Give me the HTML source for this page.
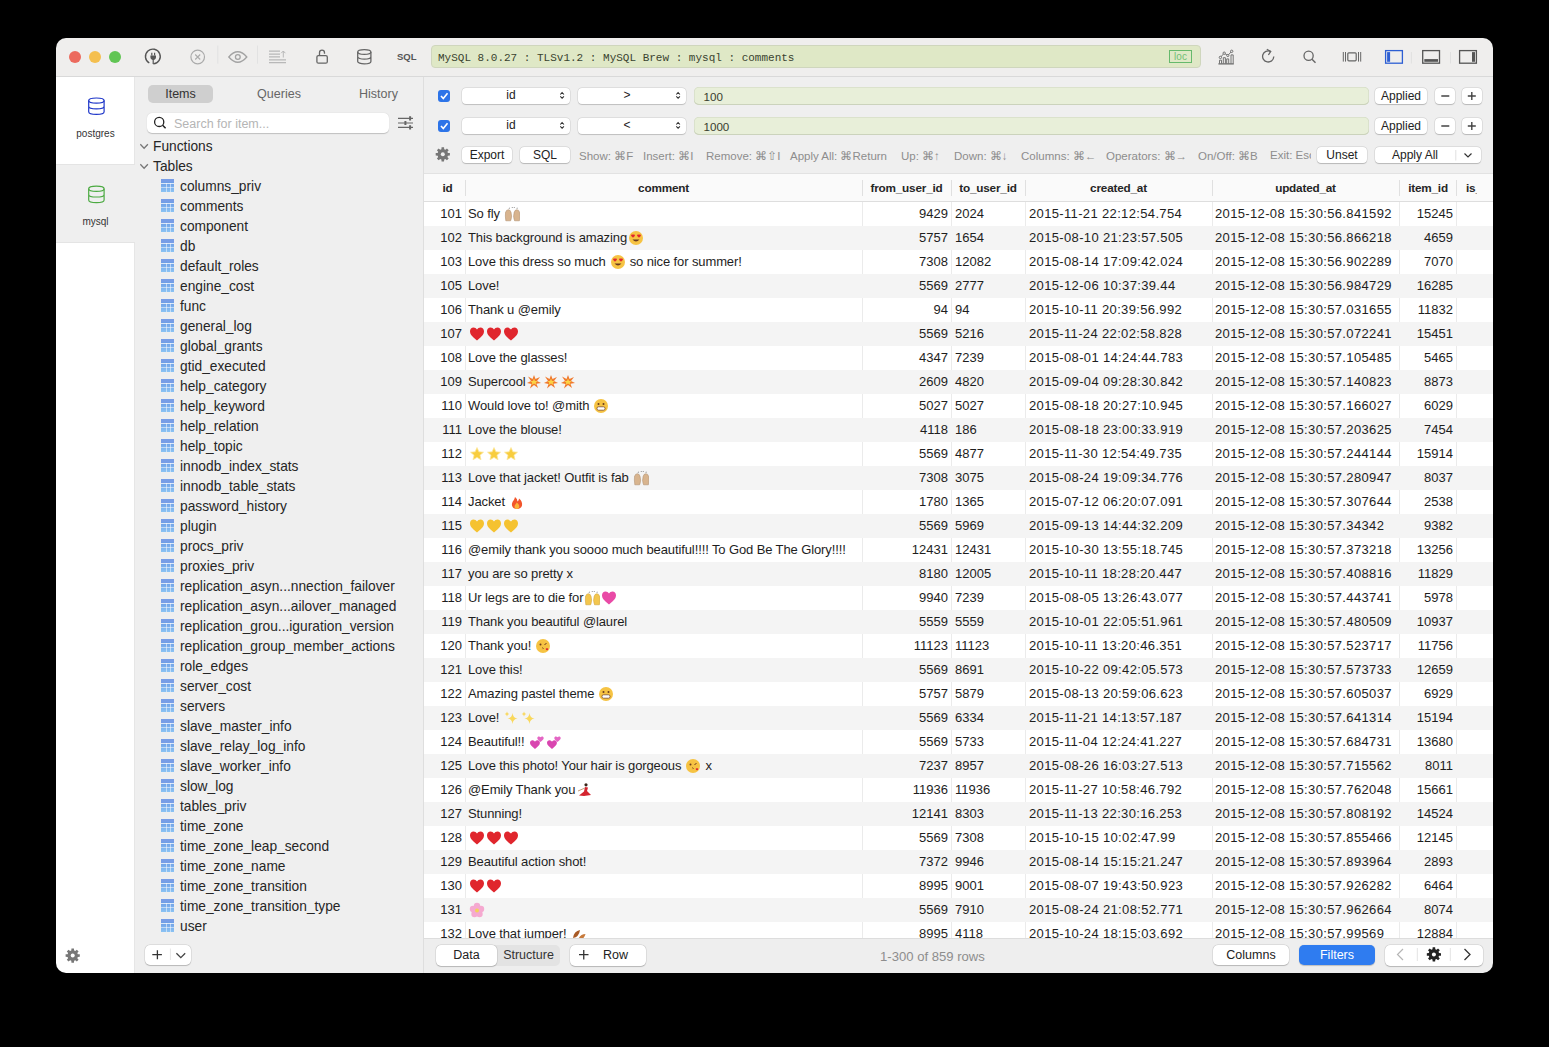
<!DOCTYPE html>
<html><head><meta charset="utf-8"><style>
html,body{margin:0;padding:0;background:#000;width:1549px;height:1047px;overflow:hidden;font-family:"Liberation Sans",sans-serif;color:#222;}
#win{position:absolute;left:0;top:0;width:1549px;height:1047px;clip-path:inset(38px 56px 74px 56px round 10px);}
.a{position:absolute;}
/* title bar */
#tb{position:absolute;left:56px;top:38px;width:1437px;height:39px;background:#efeeed;border-bottom:1px solid #d8d8d8;box-sizing:border-box;}
.tl{position:absolute;width:12px;height:12px;border-radius:50%;top:51px;}
#path{position:absolute;left:431px;top:45px;width:770px;height:23px;background:#dfe8c6;border:1px solid #cfd6bd;box-sizing:border-box;border-radius:4px;font-family:"Liberation Mono",monospace;font-size:11px;color:#39432f;line-height:25px;padding-left:6px;white-space:nowrap;}
#loc{position:absolute;left:1169px;top:50px;width:23px;height:13px;border:1px solid #66b96c;box-sizing:border-box;color:#72bf76;font-size:10px;line-height:11px;text-align:center;}
.sep{position:absolute;width:1px;background:#dcdcdc;}
/* db strip */
#strip{position:absolute;left:56px;top:76px;width:79px;height:897px;background:#fff;}
#strip .sel{position:absolute;left:0;top:88px;width:79px;height:79px;background:#efefef;border-top:1px solid #e4e4e4;border-bottom:1px solid #e4e4e4;box-sizing:border-box;}
#strip{border-right:1px solid #e6e6e6;box-sizing:border-box;}
.dbl{position:absolute;width:79px;text-align:center;font-size:10px;color:#333;margin-top:1px;}
/* sidebar */
#side{position:absolute;left:135px;top:76px;width:289px;height:897px;background:#efefef;border-right:1px solid #dedede;box-sizing:border-box;}
.seg{position:absolute;font-size:12.5px;color:#666;text-align:center;}
#items{position:absolute;left:148px;top:85px;width:65px;height:18px;border-radius:5px;background:#cfcfcf;color:#333;font-size:12.5px;line-height:18px;text-align:center;}
#search{position:absolute;left:147px;top:113px;width:242px;height:20px;background:#fff;border-radius:5px;box-shadow:0 0.5px 1px rgba(0,0,0,0.2);}
#search span{position:absolute;left:27px;top:4px;font-size:12.5px;color:#b5b5b5;}
.grp{position:absolute;left:153px;font-size:13.75px;margin-top:1px;color:#262626;}
.chev{position:absolute;left:141px;}
#tlist{position:absolute;left:160px;top:176px;}
.ti{position:absolute;left:0;height:20px;width:260px;}
.ticon{position:absolute;left:1px;top:3px;width:13px;height:13px;background:
 linear-gradient(rgba(255,255,255,.75),rgba(255,255,255,.75)) 0 3.5px/13px 1px no-repeat,
 linear-gradient(rgba(255,255,255,.5),rgba(255,255,255,.5)) 0 8px/13px 1px no-repeat,
 linear-gradient(rgba(255,255,255,.5),rgba(255,255,255,.5)) 4.5px 4px/1px 9px no-repeat,
 linear-gradient(rgba(255,255,255,.5),rgba(255,255,255,.5)) 8.5px 4px/1px 9px no-repeat,
 linear-gradient(#779de6 0,#779de6 3.5px,#6e9fe6 3.5px,#8cc3f3 13px);}
.tn{position:absolute;left:20px;top:3px;font-size:13.75px;color:#262626;white-space:nowrap;}
/* main */
#filt{position:absolute;left:424px;top:76px;width:1069px;height:98px;background:#efefef;border-bottom:1px solid #e2e2e2;box-sizing:border-box;}
.cb{position:absolute;left:438px;width:12px;height:12px;border-radius:3px;background:#2d74e8;}
.sel2{position:absolute;height:16px;background:#fff;border-radius:4px;box-shadow:0 0 0 .5px rgba(0,0,0,.12),0 .5px 1px rgba(0,0,0,.15);font-size:12px;text-align:center;line-height:14px;padding-right:10px;box-sizing:border-box;color:#222;}
.val{position:absolute;left:694px;width:675px;height:18.5px;background:#e8efd9;border-radius:5px;box-shadow:inset 0 0 0 .5px #cdd5bf,inset 0 -1px 0 #c9d1b9;font-size:11.6px;line-height:20px;padding-left:9.5px;box-sizing:border-box;color:#39412f;}
.btn{position:absolute;height:16px;background:#fff;border-radius:4px;box-shadow:0 0 0 .5px rgba(0,0,0,.12),0 .5px 1px rgba(0,0,0,.18);font-size:12px;text-align:center;line-height:16px;color:#222;}
.hint{position:absolute;top:149px;font-size:11.5px;color:#8d8d8d;white-space:nowrap;}
/* table */
#thead{position:absolute;left:424px;top:174px;width:1069px;height:28px;background:#fafafa;border-bottom:1px solid #dedede;box-sizing:border-box;}
.th{position:absolute;top:181px;font-size:11.75px;letter-spacing:-.2px;font-weight:bold;color:#262626;text-align:center;white-space:nowrap;}
.hs{position:absolute;top:180px;width:1px;height:16px;background:#e2e2e2;}
#tbody{position:absolute;left:424px;top:202px;width:1069px;height:736px;overflow:hidden;background:#fff;}
.r{position:absolute;left:0;width:1069px;height:24px;font-size:13px;line-height:24px;color:#1e1e1e;white-space:nowrap;}
.even{background:#f4f4f4;}
.r span{position:absolute;top:0;}
.c0{right:1031px;text-align:right;}
.c1{left:44px;letter-spacing:-.11px;}
.c2{right:545px;}
.c3{left:531px;}
.c4{left:605px;letter-spacing:.35px;}
.c5{left:791px;letter-spacing:.35px;}
.c6{right:40px;}
.vl{position:absolute;top:202px;width:1px;height:736px;background:#ececec;}
.em{vertical-align:-3.5px;margin:0 .5px;}
/* bottom */
#bot{position:absolute;left:424px;top:938px;width:1069px;height:35px;background:#eeeeee;border-top:1px solid #dddddd;box-sizing:border-box;}

.bseg{position:absolute;}
.vl{position:absolute;top:202px;width:1px;height:736px;background:rgba(0,0,0,.055);}
.hs{position:absolute;top:180px;width:1px;height:16px;background:#e0e0e0;}
.odd{background:linear-gradient(#ebebeb,#ebebeb) 41px 0/1px 24px no-repeat,linear-gradient(#ebebeb,#ebebeb) 438px 0/1px 24px no-repeat,linear-gradient(#ebebeb,#ebebeb) 527px 0/1px 24px no-repeat,linear-gradient(#ebebeb,#ebebeb) 601px 0/1px 24px no-repeat,linear-gradient(#ebebeb,#ebebeb) 788px 0/1px 24px no-repeat,linear-gradient(#ebebeb,#ebebeb) 975px 0/1px 24px no-repeat,linear-gradient(#ebebeb,#ebebeb) 1032px 0/1px 24px no-repeat,#fff;}

</style></head><body>
<div id="win">
<div id="tb"></div>
<div class="tl" style="left:69px;background:#ec6a5e"></div>
<div class="tl" style="left:89px;background:#f4bf4f"></div>
<div class="tl" style="left:109px;background:#61c554"></div>
<div id="path">MySQL 8.0.27 : TLSv1.2 : MySQL Brew : mysql : comments</div>
<div id="loc">loc</div>
<div class="a" style="left:397px;top:51px;font-size:9.5px;font-weight:bold;color:#555">SQL</div>

<div id="strip"><div class="sel"></div></div>
<div class="dbl" style="left:56px;top:127px">postgres</div>
<div class="dbl" style="left:56px;top:215px">mysql</div>

<div id="side"></div>
<div id="items">Items</div>
<div class="seg" style="left:255px;top:87px;width:48px">Queries</div>
<div class="seg" style="left:353.5px;top:87px;width:50px">History</div>
<div id="search"><span>Search for item...</span></div>
<div class="grp" style="top:138px">Functions</div>
<div class="grp" style="top:158px">Tables</div>
<div id="tlist">
<div class="ti" style="top:0px"><span class="ticon"></span><span class="tn">columns_priv</span></div>
<div class="ti" style="top:20px"><span class="ticon"></span><span class="tn">comments</span></div>
<div class="ti" style="top:40px"><span class="ticon"></span><span class="tn">component</span></div>
<div class="ti" style="top:60px"><span class="ticon"></span><span class="tn">db</span></div>
<div class="ti" style="top:80px"><span class="ticon"></span><span class="tn">default_roles</span></div>
<div class="ti" style="top:100px"><span class="ticon"></span><span class="tn">engine_cost</span></div>
<div class="ti" style="top:120px"><span class="ticon"></span><span class="tn">func</span></div>
<div class="ti" style="top:140px"><span class="ticon"></span><span class="tn">general_log</span></div>
<div class="ti" style="top:160px"><span class="ticon"></span><span class="tn">global_grants</span></div>
<div class="ti" style="top:180px"><span class="ticon"></span><span class="tn">gtid_executed</span></div>
<div class="ti" style="top:200px"><span class="ticon"></span><span class="tn">help_category</span></div>
<div class="ti" style="top:220px"><span class="ticon"></span><span class="tn">help_keyword</span></div>
<div class="ti" style="top:240px"><span class="ticon"></span><span class="tn">help_relation</span></div>
<div class="ti" style="top:260px"><span class="ticon"></span><span class="tn">help_topic</span></div>
<div class="ti" style="top:280px"><span class="ticon"></span><span class="tn">innodb_index_stats</span></div>
<div class="ti" style="top:300px"><span class="ticon"></span><span class="tn">innodb_table_stats</span></div>
<div class="ti" style="top:320px"><span class="ticon"></span><span class="tn">password_history</span></div>
<div class="ti" style="top:340px"><span class="ticon"></span><span class="tn">plugin</span></div>
<div class="ti" style="top:360px"><span class="ticon"></span><span class="tn">procs_priv</span></div>
<div class="ti" style="top:380px"><span class="ticon"></span><span class="tn">proxies_priv</span></div>
<div class="ti" style="top:400px"><span class="ticon"></span><span class="tn">replication_asyn...nnection_failover</span></div>
<div class="ti" style="top:420px"><span class="ticon"></span><span class="tn">replication_asyn...ailover_managed</span></div>
<div class="ti" style="top:440px"><span class="ticon"></span><span class="tn">replication_grou...iguration_version</span></div>
<div class="ti" style="top:460px"><span class="ticon"></span><span class="tn">replication_group_member_actions</span></div>
<div class="ti" style="top:480px"><span class="ticon"></span><span class="tn">role_edges</span></div>
<div class="ti" style="top:500px"><span class="ticon"></span><span class="tn">server_cost</span></div>
<div class="ti" style="top:520px"><span class="ticon"></span><span class="tn">servers</span></div>
<div class="ti" style="top:540px"><span class="ticon"></span><span class="tn">slave_master_info</span></div>
<div class="ti" style="top:560px"><span class="ticon"></span><span class="tn">slave_relay_log_info</span></div>
<div class="ti" style="top:580px"><span class="ticon"></span><span class="tn">slave_worker_info</span></div>
<div class="ti" style="top:600px"><span class="ticon"></span><span class="tn">slow_log</span></div>
<div class="ti" style="top:620px"><span class="ticon"></span><span class="tn">tables_priv</span></div>
<div class="ti" style="top:640px"><span class="ticon"></span><span class="tn">time_zone</span></div>
<div class="ti" style="top:660px"><span class="ticon"></span><span class="tn">time_zone_leap_second</span></div>
<div class="ti" style="top:680px"><span class="ticon"></span><span class="tn">time_zone_name</span></div>
<div class="ti" style="top:700px"><span class="ticon"></span><span class="tn">time_zone_transition</span></div>
<div class="ti" style="top:720px"><span class="ticon"></span><span class="tn">time_zone_transition_type</span></div>
<div class="ti" style="top:740px"><span class="ticon"></span><span class="tn">user</span></div>

</div>

<div id="filt"></div>
<div class="cb" style="top:90px"></div>
<div class="cb" style="top:120px"></div>
<div class="sel2" style="left:462px;top:88px;width:108px">id</div>
<div class="sel2" style="left:578px;top:88px;width:108px">&gt;</div>
<div class="val" style="top:86.5px">100</div>
<div class="btn" style="left:1375px;top:88px;width:52px">Applied</div>
<div class="btn" style="left:1435px;top:88px;width:20px"></div>
<div class="btn" style="left:1462px;top:88px;width:20px"></div>
<div class="sel2" style="left:462px;top:118px;width:108px">id</div>
<div class="sel2" style="left:578px;top:118px;width:108px">&lt;</div>
<div class="val" style="top:116.5px">1000</div>
<div class="btn" style="left:1375px;top:118px;width:52px">Applied</div>
<div class="btn" style="left:1435px;top:118px;width:20px"></div>
<div class="btn" style="left:1462px;top:118px;width:20px"></div>
<div class="btn" style="left:462px;top:147px;width:50px">Export</div>
<div class="btn" style="left:520px;top:147px;width:50px">SQL</div>
<div class="hint" style="left:579px">Show: ⌘F</div>
<div class="hint" style="left:643px">Insert: ⌘I</div>
<div class="hint" style="left:706px">Remove: ⌘⇧I</div>
<div class="hint" style="left:790px">Apply All: ⌘Return</div>
<div class="hint" style="left:901px">Up: ⌘↑</div>
<div class="hint" style="left:954px">Down: ⌘↓</div>
<div class="hint" style="left:1021px">Columns: ⌘←</div>
<div class="hint" style="left:1106px">Operators: ⌘→</div>
<div class="hint" style="left:1198px">On/Off: ⌘B</div>
<div class="hint" style="left:1270px;width:41px;overflow:hidden">Exit: Esc</div>
<div class="btn" style="left:1317px;top:147px;width:50px">Unset</div>
<div class="btn" style="left:1375px;top:147px;width:106px;padding-right:26px;box-sizing:border-box">Apply All</div>

<div id="thead"></div>
<div class="th" style="left:427px;width:41px">id</div>
<div class="th" style="left:465px;width:397px">comment</div>
<div class="th" style="left:862px;width:89px">from_user_id</div>
<div class="th" style="left:951px;width:74px">to_user_id</div>
<div class="th" style="left:1025px;width:187px">created_at</div>
<div class="th" style="left:1212px;width:187px">updated_at</div>
<div class="th" style="left:1399px;width:58px">item_id</div>
<div class="th" style="left:1466px;width:11px;overflow:hidden;text-align:left">is_</div>
<div id="tbody">
<div class="r odd" style="top:0px"><span class="c0">101</span><span class="c1">So fly <svg class="em" width="16" height="16" viewBox="0 0 16 16"><path d="M1.8 14.8 Q1 9.5 1.6 6.2 Q2.4 3.6 4.4 3.7 Q6.6 3.9 7.1 6.6 L7.6 10.2 Q7.4 13 6.6 14.8Z" fill="#d8b48e" stroke="#a88868" stroke-width=".5"/><path d="M15.4 14.8 Q16.2 9.5 15.6 6.2 Q14.8 3.6 12.8 3.7 Q10.6 3.9 10.1 6.6 L9.6 10.2 Q9.8 13 10.6 14.8Z" fill="#d8b48e" stroke="#a88868" stroke-width=".5"/><path d="M4.6 2.4 l.7-1 .7 1z M7.6 2 l.6-1 .6 1z M9.6 2 l.6-1 .6 1z M12.4 2.4 l.7-1 .7 1z" fill="#555"/></svg></span><span class="c2">9429</span><span class="c3">2024</span><span class="c4">2015-11-21 22:12:54.754</span><span class="c5">2015-12-08 15:30:56.841592</span><span class="c6">15245</span></div>
<div class="r even" style="top:24px"><span class="c0">102</span><span class="c1">This background is amazing<svg class="em" width="16" height="16" viewBox="0 0 16 16"><circle cx="8" cy="8" r="7" fill="#f6c343"/><path d="M5 4.8c-.6-.7-1.9-.4-1.9.6 0 .8 1.9 2.1 1.9 2.1s1.9-1.3 1.9-2.1c0-1-1.3-1.3-1.9-.6z" fill="#e2262e"/><path d="M11 4.8c-.6-.7-1.9-.4-1.9.6 0 .8 1.9 2.1 1.9 2.1s1.9-1.3 1.9-2.1c0-1-1.3-1.3-1.9-.6z" fill="#e2262e"/><path d="M4.5 9.5 Q8 13.5 11.5 9.5Z" fill="#6b3a1e"/></svg></span><span class="c2">5757</span><span class="c3">1654</span><span class="c4">2015-08-10 21:23:57.505</span><span class="c5">2015-12-08 15:30:56.866218</span><span class="c6">4659</span></div>
<div class="r odd" style="top:48px"><span class="c0">103</span><span class="c1">Love this dress so much <svg class="em" width="16" height="16" viewBox="0 0 16 16"><circle cx="8" cy="8" r="7" fill="#f6c343"/><path d="M5 4.8c-.6-.7-1.9-.4-1.9.6 0 .8 1.9 2.1 1.9 2.1s1.9-1.3 1.9-2.1c0-1-1.3-1.3-1.9-.6z" fill="#e2262e"/><path d="M11 4.8c-.6-.7-1.9-.4-1.9.6 0 .8 1.9 2.1 1.9 2.1s1.9-1.3 1.9-2.1c0-1-1.3-1.3-1.9-.6z" fill="#e2262e"/><path d="M4.5 9.5 Q8 13.5 11.5 9.5Z" fill="#6b3a1e"/></svg> so nice for summer!</span><span class="c2">7308</span><span class="c3">12082</span><span class="c4">2015-08-14 17:09:42.024</span><span class="c5">2015-12-08 15:30:56.902289</span><span class="c6">7070</span></div>
<div class="r even" style="top:72px"><span class="c0">105</span><span class="c1">Love!</span><span class="c2">5569</span><span class="c3">2777</span><span class="c4">2015-12-06 10:37:39.44</span><span class="c5">2015-12-08 15:30:56.984729</span><span class="c6">16285</span></div>
<div class="r odd" style="top:96px"><span class="c0">106</span><span class="c1">Thank u @emily</span><span class="c2">94</span><span class="c3">94</span><span class="c4">2015-10-11 20:39:56.992</span><span class="c5">2015-12-08 15:30:57.031655</span><span class="c6">11832</span></div>
<div class="r even" style="top:120px"><span class="c0">107</span><span class="c1"><svg class="em" width="16" height="16" viewBox="0 0 16 16"><path d="M8 14.5 C3 10.5 1 8.3 1 5.3 C1 3.2 2.6 1.6 4.5 1.6 C6 1.6 7.2 2.5 8 3.6 C8.8 2.5 10 1.6 11.5 1.6 C13.4 1.6 15 3.2 15 5.3 C15 8.3 13 10.5 8 14.5Z" fill="#e0262d"/></svg><svg class="em" width="16" height="16" viewBox="0 0 16 16"><path d="M8 14.5 C3 10.5 1 8.3 1 5.3 C1 3.2 2.6 1.6 4.5 1.6 C6 1.6 7.2 2.5 8 3.6 C8.8 2.5 10 1.6 11.5 1.6 C13.4 1.6 15 3.2 15 5.3 C15 8.3 13 10.5 8 14.5Z" fill="#e0262d"/></svg><svg class="em" width="16" height="16" viewBox="0 0 16 16"><path d="M8 14.5 C3 10.5 1 8.3 1 5.3 C1 3.2 2.6 1.6 4.5 1.6 C6 1.6 7.2 2.5 8 3.6 C8.8 2.5 10 1.6 11.5 1.6 C13.4 1.6 15 3.2 15 5.3 C15 8.3 13 10.5 8 14.5Z" fill="#e0262d"/></svg></span><span class="c2">5569</span><span class="c3">5216</span><span class="c4">2015-11-24 22:02:58.828</span><span class="c5">2015-12-08 15:30:57.072241</span><span class="c6">15451</span></div>
<div class="r odd" style="top:144px"><span class="c0">108</span><span class="c1">Love the glasses!</span><span class="c2">4347</span><span class="c3">7239</span><span class="c4">2015-08-01 14:24:44.783</span><span class="c5">2015-12-08 15:30:57.105485</span><span class="c6">5465</span></div>
<div class="r even" style="top:168px"><span class="c0">109</span><span class="c1">Supercool<svg class="em" width="16" height="16" viewBox="0 0 16 16"><path d="M8 1 L9.5 5 L14 3 L11 7 L15 9 L10.5 9.8 L12 14 L8 11 L4 14.5 L5.5 10 L1 9 L5 7 L2 2.5 L6.5 5Z" fill="#f07a2e"/><path d="M8 4.5 L9 7 L11.5 7 L9.7 8.7 L10.5 11 L8 9.6 L5.5 11 L6.3 8.7 L4.5 7 L7 7Z" fill="#fbd446"/></svg><svg class="em" width="16" height="16" viewBox="0 0 16 16"><path d="M8 1 L9.5 5 L14 3 L11 7 L15 9 L10.5 9.8 L12 14 L8 11 L4 14.5 L5.5 10 L1 9 L5 7 L2 2.5 L6.5 5Z" fill="#f07a2e"/><path d="M8 4.5 L9 7 L11.5 7 L9.7 8.7 L10.5 11 L8 9.6 L5.5 11 L6.3 8.7 L4.5 7 L7 7Z" fill="#fbd446"/></svg><svg class="em" width="16" height="16" viewBox="0 0 16 16"><path d="M8 1 L9.5 5 L14 3 L11 7 L15 9 L10.5 9.8 L12 14 L8 11 L4 14.5 L5.5 10 L1 9 L5 7 L2 2.5 L6.5 5Z" fill="#f07a2e"/><path d="M8 4.5 L9 7 L11.5 7 L9.7 8.7 L10.5 11 L8 9.6 L5.5 11 L6.3 8.7 L4.5 7 L7 7Z" fill="#fbd446"/></svg></span><span class="c2">2609</span><span class="c3">4820</span><span class="c4">2015-09-04 09:28:30.842</span><span class="c5">2015-12-08 15:30:57.140823</span><span class="c6">8873</span></div>
<div class="r odd" style="top:192px"><span class="c0">110</span><span class="c1">Would love to! @mith <svg class="em" width="16" height="16" viewBox="0 0 16 16"><circle cx="8" cy="8" r="7" fill="#f6c343"/><circle cx="5.5" cy="6" r="1" fill="#6b3a1e"/><circle cx="10.5" cy="6" r="1" fill="#6b3a1e"/><rect x="4" y="8.8" width="8" height="3.4" rx="1.5" fill="#fff" stroke="#6b3a1e" stroke-width=".7"/></svg></span><span class="c2">5027</span><span class="c3">5027</span><span class="c4">2015-08-18 20:27:10.945</span><span class="c5">2015-12-08 15:30:57.166027</span><span class="c6">6029</span></div>
<div class="r even" style="top:216px"><span class="c0">111</span><span class="c1">Love the blouse!</span><span class="c2">4118</span><span class="c3">186</span><span class="c4">2015-08-18 23:00:33.919</span><span class="c5">2015-12-08 15:30:57.203625</span><span class="c6">7454</span></div>
<div class="r odd" style="top:240px"><span class="c0">112</span><span class="c1"><svg class="em" width="16" height="16" viewBox="0 0 16 16"><path d="M8 1.5 L9.9 5.8 L14.5 6.2 L11 9.2 L12 13.8 L8 11.4 L4 13.8 L5 9.2 L1.5 6.2 L6.1 5.8Z" fill="#f8cd3e" stroke="#fbe7a0" stroke-width=".8"/></svg><svg class="em" width="16" height="16" viewBox="0 0 16 16"><path d="M8 1.5 L9.9 5.8 L14.5 6.2 L11 9.2 L12 13.8 L8 11.4 L4 13.8 L5 9.2 L1.5 6.2 L6.1 5.8Z" fill="#f8cd3e" stroke="#fbe7a0" stroke-width=".8"/></svg><svg class="em" width="16" height="16" viewBox="0 0 16 16"><path d="M8 1.5 L9.9 5.8 L14.5 6.2 L11 9.2 L12 13.8 L8 11.4 L4 13.8 L5 9.2 L1.5 6.2 L6.1 5.8Z" fill="#f8cd3e" stroke="#fbe7a0" stroke-width=".8"/></svg></span><span class="c2">5569</span><span class="c3">4877</span><span class="c4">2015-11-30 12:54:49.735</span><span class="c5">2015-12-08 15:30:57.244144</span><span class="c6">15914</span></div>
<div class="r even" style="top:264px"><span class="c0">113</span><span class="c1">Love that jacket! Outfit is fab <svg class="em" width="16" height="16" viewBox="0 0 16 16"><path d="M1.8 14.8 Q1 9.5 1.6 6.2 Q2.4 3.6 4.4 3.7 Q6.6 3.9 7.1 6.6 L7.6 10.2 Q7.4 13 6.6 14.8Z" fill="#d8b48e" stroke="#a88868" stroke-width=".5"/><path d="M15.4 14.8 Q16.2 9.5 15.6 6.2 Q14.8 3.6 12.8 3.7 Q10.6 3.9 10.1 6.6 L9.6 10.2 Q9.8 13 10.6 14.8Z" fill="#d8b48e" stroke="#a88868" stroke-width=".5"/><path d="M4.6 2.4 l.7-1 .7 1z M7.6 2 l.6-1 .6 1z M9.6 2 l.6-1 .6 1z M12.4 2.4 l.7-1 .7 1z" fill="#555"/></svg></span><span class="c2">7308</span><span class="c3">3075</span><span class="c4">2015-08-24 19:09:34.776</span><span class="c5">2015-12-08 15:30:57.280947</span><span class="c6">8037</span></div>
<div class="r odd" style="top:288px"><span class="c0">114</span><span class="c1">Jacket <svg class="em" width="16" height="16" viewBox="0 0 16 16"><path d="M8 15 C4 15 2.5 12 3 9.5 C3.5 7 5.5 6 6 3 C8 4.5 8.5 6 8.3 7.5 C9.5 7 10 5.5 10 4.5 C12.5 6.5 13.5 9 13 11.5 C12.5 13.5 10.5 15 8 15Z" fill="#f2552b"/><path d="M8 15 C6 15 5.3 13.5 5.6 12 C6 10.5 7.3 10 7.6 8.5 C9 9.5 10.5 11 10.3 12.8 C10 14.2 9 15 8 15Z" fill="#fbb339"/></svg></span><span class="c2">1780</span><span class="c3">1365</span><span class="c4">2015-07-12 06:20:07.091</span><span class="c5">2015-12-08 15:30:57.307644</span><span class="c6">2538</span></div>
<div class="r even" style="top:312px"><span class="c0">115</span><span class="c1"><svg class="em" width="16" height="16" viewBox="0 0 16 16"><path d="M8 14.5 C3 10.5 1 8.3 1 5.3 C1 3.2 2.6 1.6 4.5 1.6 C6 1.6 7.2 2.5 8 3.6 C8.8 2.5 10 1.6 11.5 1.6 C13.4 1.6 15 3.2 15 5.3 C15 8.3 13 10.5 8 14.5Z" fill="#f5c230"/></svg><svg class="em" width="16" height="16" viewBox="0 0 16 16"><path d="M8 14.5 C3 10.5 1 8.3 1 5.3 C1 3.2 2.6 1.6 4.5 1.6 C6 1.6 7.2 2.5 8 3.6 C8.8 2.5 10 1.6 11.5 1.6 C13.4 1.6 15 3.2 15 5.3 C15 8.3 13 10.5 8 14.5Z" fill="#f5c230"/></svg><svg class="em" width="16" height="16" viewBox="0 0 16 16"><path d="M8 14.5 C3 10.5 1 8.3 1 5.3 C1 3.2 2.6 1.6 4.5 1.6 C6 1.6 7.2 2.5 8 3.6 C8.8 2.5 10 1.6 11.5 1.6 C13.4 1.6 15 3.2 15 5.3 C15 8.3 13 10.5 8 14.5Z" fill="#f5c230"/></svg></span><span class="c2">5569</span><span class="c3">5969</span><span class="c4">2015-09-13 14:44:32.209</span><span class="c5">2015-12-08 15:30:57.34342</span><span class="c6">9382</span></div>
<div class="r odd" style="top:336px"><span class="c0">116</span><span class="c1">@emily thank you soooo much beautiful!!!! To God Be The Glory!!!!</span><span class="c2">12431</span><span class="c3">12431</span><span class="c4">2015-10-30 13:55:18.745</span><span class="c5">2015-12-08 15:30:57.373218</span><span class="c6">13256</span></div>
<div class="r even" style="top:360px"><span class="c0">117</span><span class="c1">you are so pretty x</span><span class="c2">8180</span><span class="c3">12005</span><span class="c4">2015-10-11 18:28:20.447</span><span class="c5">2015-12-08 15:30:57.408816</span><span class="c6">11829</span></div>
<div class="r odd" style="top:384px"><span class="c0">118</span><span class="c1">Ur legs are to die for<svg class="em" width="16" height="16" viewBox="0 0 16 16"><path d="M1.8 14.8 Q1 9.5 1.6 6.2 Q2.4 3.6 4.4 3.7 Q6.6 3.9 7.1 6.6 L7.6 10.2 Q7.4 13 6.6 14.8Z" fill="#f3c64e" stroke="#c99a2a" stroke-width=".5"/><path d="M15.4 14.8 Q16.2 9.5 15.6 6.2 Q14.8 3.6 12.8 3.7 Q10.6 3.9 10.1 6.6 L9.6 10.2 Q9.8 13 10.6 14.8Z" fill="#f3c64e" stroke="#c99a2a" stroke-width=".5"/><path d="M4.6 2.4 l.7-1 .7 1z M7.6 2 l.6-1 .6 1z M9.6 2 l.6-1 .6 1z M12.4 2.4 l.7-1 .7 1z" fill="#555"/></svg><svg class="em" width="16" height="16" viewBox="0 0 16 16"><path d="M8 14.5 C3 10.5 1 8.3 1 5.3 C1 3.2 2.6 1.6 4.5 1.6 C6 1.6 7.2 2.5 8 3.6 C8.8 2.5 10 1.6 11.5 1.6 C13.4 1.6 15 3.2 15 5.3 C15 8.3 13 10.5 8 14.5Z" fill="#e94aa6"/></svg></span><span class="c2">9940</span><span class="c3">7239</span><span class="c4">2015-08-05 13:26:43.077</span><span class="c5">2015-12-08 15:30:57.443741</span><span class="c6">5978</span></div>
<div class="r even" style="top:408px"><span class="c0">119</span><span class="c1">Thank you beautiful @laurel</span><span class="c2">5559</span><span class="c3">5559</span><span class="c4">2015-10-01 22:05:51.961</span><span class="c5">2015-12-08 15:30:57.480509</span><span class="c6">10937</span></div>
<div class="r odd" style="top:432px"><span class="c0">120</span><span class="c1">Thank you! <svg class="em" width="16" height="16" viewBox="0 0 16 16"><circle cx="8" cy="8" r="7" fill="#f6c343"/><circle cx="5.5" cy="6.5" r="1" fill="#6b3a1e"/><path d="M9.5 6.5 l2 -1" stroke="#6b3a1e" stroke-width="1"/><path d="M7.5 9.5 q1.5 .8 0 1.6" stroke="#6b3a1e" fill="none" stroke-width=".9"/><path d="M12 10.5c-.4-.5-1.3-.3-1.3.4 0 .6 1.3 1.4 1.3 1.4s1.3-.8 1.3-1.4c0-.7-.9-.9-1.3-.4z" fill="#e2262e"/></svg></span><span class="c2">11123</span><span class="c3">11123</span><span class="c4">2015-10-11 13:20:46.351</span><span class="c5">2015-12-08 15:30:57.523717</span><span class="c6">11756</span></div>
<div class="r even" style="top:456px"><span class="c0">121</span><span class="c1">Love this!</span><span class="c2">5569</span><span class="c3">8691</span><span class="c4">2015-10-22 09:42:05.573</span><span class="c5">2015-12-08 15:30:57.573733</span><span class="c6">12659</span></div>
<div class="r odd" style="top:480px"><span class="c0">122</span><span class="c1">Amazing pastel theme <svg class="em" width="16" height="16" viewBox="0 0 16 16"><circle cx="8" cy="8" r="7" fill="#f6c343"/><circle cx="5.5" cy="6" r="1" fill="#6b3a1e"/><circle cx="10.5" cy="6" r="1" fill="#6b3a1e"/><rect x="4" y="8.8" width="8" height="3.4" rx="1.5" fill="#fff" stroke="#6b3a1e" stroke-width=".7"/></svg></span><span class="c2">5757</span><span class="c3">5879</span><span class="c4">2015-08-13 20:59:06.623</span><span class="c5">2015-12-08 15:30:57.605037</span><span class="c6">6929</span></div>
<div class="r even" style="top:504px"><span class="c0">123</span><span class="c1">Love! <svg class="em" width="16" height="16" viewBox="0 0 16 16"><path d="M9.5 3 Q10 8 14.5 8.5 Q10 9 9.5 14 Q9 9 4.5 8.5 Q9 8 9.5 3Z" fill="#f9d85c"/><path d="M4 1.5 Q4.3 3.8 6.3 4 Q4.3 4.3 4 6.5 Q3.7 4.3 1.7 4 Q3.7 3.8 4 1.5Z" fill="#f9d85c"/></svg><svg class="em" width="16" height="16" viewBox="0 0 16 16"><path d="M9.5 3 Q10 8 14.5 8.5 Q10 9 9.5 14 Q9 9 4.5 8.5 Q9 8 9.5 3Z" fill="#f9d85c"/><path d="M4 1.5 Q4.3 3.8 6.3 4 Q4.3 4.3 4 6.5 Q3.7 4.3 1.7 4 Q3.7 3.8 4 1.5Z" fill="#f9d85c"/></svg></span><span class="c2">5569</span><span class="c3">6334</span><span class="c4">2015-11-21 14:13:57.187</span><span class="c5">2015-12-08 15:30:57.641314</span><span class="c6">15194</span></div>
<div class="r odd" style="top:528px"><span class="c0">124</span><span class="c1">Beautiful!! <svg class="em" width="16" height="16" viewBox="0 0 16 16"><path d="M6 15 C2.5 12.3 1 10.8 1 8.8 C1 7.4 2.1 6.3 3.4 6.3 C4.4 6.3 5.3 6.9 6 7.7 C6.6 6.9 7.5 6.3 8.5 6.3 C9.8 6.3 10.9 7.4 10.9 8.8 C10.9 10.8 9.5 12.3 6 15Z" fill="#d946b0"/><path d="M11.5 8 C9.3 6.3 8.3 5.3 8.3 4 C8.3 3.1 9 2.4 9.9 2.4 C10.5 2.4 11.1 2.8 11.5 3.3 C11.9 2.8 12.5 2.4 13.1 2.4 C14 2.4 14.7 3.1 14.7 4 C14.7 5.3 13.7 6.3 11.5 8Z" fill="#e466c4"/></svg><svg class="em" width="16" height="16" viewBox="0 0 16 16"><path d="M6 15 C2.5 12.3 1 10.8 1 8.8 C1 7.4 2.1 6.3 3.4 6.3 C4.4 6.3 5.3 6.9 6 7.7 C6.6 6.9 7.5 6.3 8.5 6.3 C9.8 6.3 10.9 7.4 10.9 8.8 C10.9 10.8 9.5 12.3 6 15Z" fill="#d946b0"/><path d="M11.5 8 C9.3 6.3 8.3 5.3 8.3 4 C8.3 3.1 9 2.4 9.9 2.4 C10.5 2.4 11.1 2.8 11.5 3.3 C11.9 2.8 12.5 2.4 13.1 2.4 C14 2.4 14.7 3.1 14.7 4 C14.7 5.3 13.7 6.3 11.5 8Z" fill="#e466c4"/></svg></span><span class="c2">5569</span><span class="c3">5733</span><span class="c4">2015-11-04 12:24:41.227</span><span class="c5">2015-12-08 15:30:57.684731</span><span class="c6">13680</span></div>
<div class="r even" style="top:552px"><span class="c0">125</span><span class="c1">Love this photo! Your hair is gorgeous <svg class="em" width="16" height="16" viewBox="0 0 16 16"><circle cx="8" cy="8" r="7" fill="#f6c343"/><circle cx="5.5" cy="6.5" r="1" fill="#6b3a1e"/><path d="M9.5 6.5 l2 -1" stroke="#6b3a1e" stroke-width="1"/><path d="M7.5 9.5 q1.5 .8 0 1.6" stroke="#6b3a1e" fill="none" stroke-width=".9"/><path d="M12 10.5c-.4-.5-1.3-.3-1.3.4 0 .6 1.3 1.4 1.3 1.4s1.3-.8 1.3-1.4c0-.7-.9-.9-1.3-.4z" fill="#e2262e"/></svg> x</span><span class="c2">7237</span><span class="c3">8957</span><span class="c4">2015-08-26 16:03:27.513</span><span class="c5">2015-12-08 15:30:57.715562</span><span class="c6">8011</span></div>
<div class="r odd" style="top:576px"><span class="c0">126</span><span class="c1">@Emily Thank you<svg class="em" width="16" height="16" viewBox="0 0 16 16"><circle cx="10" cy="2.8" r="1.6" fill="#3a2418"/><path d="M9 5 L12 5.5 L11 9 L15 13 L8 14 L3 13.5 L8 9.5Z" fill="#d4242f"/><path d="M2 9 L9 6" stroke="#c79a78" stroke-width="1"/></svg></span><span class="c2">11936</span><span class="c3">11936</span><span class="c4">2015-11-27 10:58:46.792</span><span class="c5">2015-12-08 15:30:57.762048</span><span class="c6">15661</span></div>
<div class="r even" style="top:600px"><span class="c0">127</span><span class="c1">Stunning!</span><span class="c2">12141</span><span class="c3">8303</span><span class="c4">2015-11-13 22:30:16.253</span><span class="c5">2015-12-08 15:30:57.808192</span><span class="c6">14524</span></div>
<div class="r odd" style="top:624px"><span class="c0">128</span><span class="c1"><svg class="em" width="16" height="16" viewBox="0 0 16 16"><path d="M8 14.5 C3 10.5 1 8.3 1 5.3 C1 3.2 2.6 1.6 4.5 1.6 C6 1.6 7.2 2.5 8 3.6 C8.8 2.5 10 1.6 11.5 1.6 C13.4 1.6 15 3.2 15 5.3 C15 8.3 13 10.5 8 14.5Z" fill="#e0262d"/></svg><svg class="em" width="16" height="16" viewBox="0 0 16 16"><path d="M8 14.5 C3 10.5 1 8.3 1 5.3 C1 3.2 2.6 1.6 4.5 1.6 C6 1.6 7.2 2.5 8 3.6 C8.8 2.5 10 1.6 11.5 1.6 C13.4 1.6 15 3.2 15 5.3 C15 8.3 13 10.5 8 14.5Z" fill="#e0262d"/></svg><svg class="em" width="16" height="16" viewBox="0 0 16 16"><path d="M8 14.5 C3 10.5 1 8.3 1 5.3 C1 3.2 2.6 1.6 4.5 1.6 C6 1.6 7.2 2.5 8 3.6 C8.8 2.5 10 1.6 11.5 1.6 C13.4 1.6 15 3.2 15 5.3 C15 8.3 13 10.5 8 14.5Z" fill="#e0262d"/></svg></span><span class="c2">5569</span><span class="c3">7308</span><span class="c4">2015-10-15 10:02:47.99</span><span class="c5">2015-12-08 15:30:57.855466</span><span class="c6">12145</span></div>
<div class="r even" style="top:648px"><span class="c0">129</span><span class="c1">Beautiful action shot!</span><span class="c2">7372</span><span class="c3">9946</span><span class="c4">2015-08-14 15:15:21.247</span><span class="c5">2015-12-08 15:30:57.893964</span><span class="c6">2893</span></div>
<div class="r odd" style="top:672px"><span class="c0">130</span><span class="c1"><svg class="em" width="16" height="16" viewBox="0 0 16 16"><path d="M8 14.5 C3 10.5 1 8.3 1 5.3 C1 3.2 2.6 1.6 4.5 1.6 C6 1.6 7.2 2.5 8 3.6 C8.8 2.5 10 1.6 11.5 1.6 C13.4 1.6 15 3.2 15 5.3 C15 8.3 13 10.5 8 14.5Z" fill="#e0262d"/></svg><svg class="em" width="16" height="16" viewBox="0 0 16 16"><path d="M8 14.5 C3 10.5 1 8.3 1 5.3 C1 3.2 2.6 1.6 4.5 1.6 C6 1.6 7.2 2.5 8 3.6 C8.8 2.5 10 1.6 11.5 1.6 C13.4 1.6 15 3.2 15 5.3 C15 8.3 13 10.5 8 14.5Z" fill="#e0262d"/></svg></span><span class="c2">8995</span><span class="c3">9001</span><span class="c4">2015-08-07 19:43:50.923</span><span class="c5">2015-12-08 15:30:57.926282</span><span class="c6">6464</span></div>
<div class="r even" style="top:696px"><span class="c0">131</span><span class="c1"><svg class="em" width="16" height="16" viewBox="0 0 16 16"><g fill="#f5a9d0"><circle cx="8" cy="4" r="3.2"/><circle cx="12" cy="7" r="3.2"/><circle cx="10.5" cy="12" r="3.2"/><circle cx="5.5" cy="12" r="3.2"/><circle cx="4" cy="7" r="3.2"/></g><circle cx="8" cy="8.5" r="2" fill="#f2d15a"/></svg></span><span class="c2">5569</span><span class="c3">7910</span><span class="c4">2015-08-24 21:08:52.771</span><span class="c5">2015-12-08 15:30:57.962664</span><span class="c6">8074</span></div>
<div class="r odd" style="top:720px"><span class="c0">132</span><span class="c1">Love that jumper! <svg class="em" width="16" height="16" viewBox="0 0 16 16"><path d="M2 12 Q3 5 9 4 Q8 11 2 12Z" fill="#a85a26"/><path d="M7 14 Q9 8 14.5 8 Q13 14 7 14Z" fill="#c77a3c"/></svg></span><span class="c2">8995</span><span class="c3">4118</span><span class="c4">2015-10-24 18:15:03.692</span><span class="c5">2015-12-08 15:30:57.99569</span><span class="c6">12884</span></div>

</div>
<div class="hs" style="left:465px"></div><div class="hs" style="left:862px"></div><div class="hs" style="left:951px"></div><div class="hs" style="left:1025px"></div><div class="hs" style="left:1212px"></div><div class="hs" style="left:1399px"></div><div class="hs" style="left:1456px"></div>

<div id="bot"></div>
<div class="a" style="left:56px;top:76px;width:1437px;height:1px;background:#d9d9d9"></div>
<div class="btn" style="left:145px;top:945px;width:46px;height:20px;border-radius:5px"></div>
<div class="bseg" style="left:436px;top:944.5px;width:124px;height:21px;background:#e3e3e3;border-radius:5px"></div>
<div class="btn" style="left:436px;top:944.5px;width:61px;height:21px;line-height:21px;border-radius:5px;font-size:12.5px">Data</div>
<div class="a" style="left:497px;top:944.5px;width:63px;height:21px;line-height:21px;text-align:center;font-size:12.5px;color:#333">Structure</div>
<div class="btn" style="left:570px;top:944.5px;width:76px;height:21px;line-height:21px;border-radius:5px;font-size:12.5px;text-align:left"><span style="position:absolute;left:33px">Row</span></div>
<div class="btn" style="left:1213px;top:945px;width:76px;height:20px;line-height:20px;border-radius:5px;font-size:12.5px">Columns</div>
<div class="a" style="left:1299px;top:945px;width:76px;height:20px;line-height:20px;border-radius:5px;font-size:12.5px;background:#2f7cf0;color:#fff;text-align:center;box-shadow:0 .5px 1px rgba(0,0,0,.2)">Filters</div>
<div class="btn" style="left:1385px;top:944.5px;width:98px;height:21px;border-radius:5px"></div>
<svg class="a" style="left:0;top:0" width="1549" height="1047" viewBox="0 0 1549 1047" fill="none">
<!-- plug -->
<path d="M149.3 63 A7.4 7.4 0 1 1 153.3 63.9" stroke="#555" stroke-width="1.4"/>
<path d="M150.4 55.5 h5.6 v1.6 a2.8 2.8 0 0 1 -5.6 0z" fill="#555"/>
<path d="M151.8 52.8 v2.8 M154.6 52.8 v2.8 M153.2 59 v4.9" stroke="#555" stroke-width="1.2"/>
<!-- x circle -->
<circle cx="197.7" cy="57" r="6.8" stroke="#ababab" stroke-width="1.2"/>
<path d="M195.2 54.5 l5 5 M200.2 54.5 l-5 5" stroke="#ababab" stroke-width="1.1"/>
<path d="M217.8 45.5 v18.2 M257.5 45.5 v18.2" stroke="#e2e2e2" stroke-width="1"/>
<!-- eye -->
<path d="M228.8 57 Q237.8 46.5 246.8 57 Q237.8 67.5 228.8 57Z" stroke="#a3a3a3" stroke-width="1.3"/>
<circle cx="237.8" cy="57" r="2.4" stroke="#a3a3a3" stroke-width="1.3"/>
<!-- lines -->
<path d="M269 51.2 h11 M269 54.1 h11 M269 56.9 h11 M269 59.8 h17 M269 62.6 h17" stroke="#b8b8b8" stroke-width="1.2"/>
<path d="M283.3 57.5 v-6.5 M281.2 53.2 l2.1 -2.2 l2.1 2.2" stroke="#b8b8b8" stroke-width="1"/>
<!-- lock -->
<rect x="316.9" y="55.6" width="10.4" height="7.6" rx="1.5" stroke="#666" stroke-width="1.3"/>
<path d="M319.5 55.5 v-2.8 a2.5 2.5 0 0 1 5 0 v1" stroke="#666" stroke-width="1.3"/>
<!-- db -->
<ellipse cx="364.3" cy="52" rx="6.6" ry="2.4" stroke="#666" stroke-width="1.3"/>
<path d="M357.7 52 v9.5 a6.6 2.4 0 0 0 13.2 0 v-9.5 M357.7 56.8 a6.6 2.4 0 0 0 13.2 0" stroke="#666" stroke-width="1.3"/>
<!-- chart -->
<path d="M1218.4 63.9 h15.4" stroke="#666" stroke-width="1.1"/>
<path d="M1219.5 63.5 v-3.3 h2 v3.3 M1223.3 63.5 v-5.8 h2.1 v5.8 M1226.7 63.5 v-4.6 h2 v4.6 M1231 63.5 v-8.6 h2.2 v8.6" stroke="#666" stroke-width=".9"/>
<path d="M1220.4 57.4 L1224.2 53.2 L1227.8 55.5 L1231.7 51.3" stroke="#666" stroke-width=".9"/>
<circle cx="1220.4" cy="57.4" r="1.2" fill="#efeeed" stroke="#666" stroke-width=".9"/>
<circle cx="1224.2" cy="53.2" r="1.2" fill="#efeeed" stroke="#666" stroke-width=".9"/>
<circle cx="1227.8" cy="55.5" r="1.1" fill="#efeeed" stroke="#666" stroke-width=".9"/>
<circle cx="1231.7" cy="51.3" r="1.2" fill="#efeeed" stroke="#666" stroke-width=".9"/>
<!-- refresh -->
<path d="M1270.5 51.3 A5.6 5.6 0 1 0 1273.8 56.6" stroke="#666" stroke-width="1.3"/>
<path d="M1266.8 49.3 l3.9 2.1 l-2.3 3.6" stroke="#666" stroke-width="1.3"/>
<!-- search -->
<circle cx="1308.6" cy="55.8" r="4.6" stroke="#666" stroke-width="1.3"/>
<path d="M1312 59.3 l3.5 3.4" stroke="#666" stroke-width="1.4"/>
<!-- columns -->
<path d="M1343.3 52 v9.6 M1345.5 52 v9.6 M1358.5 52 v9.6 M1360.7 52 v9.6" stroke="#666" stroke-width="1"/>
<rect x="1347.8" y="52.8" width="8.4" height="8" rx="1" stroke="#666" stroke-width="1.2"/>
<!-- panels -->
<rect x="1385.6" y="50.6" width="16.8" height="12.6" stroke="#2d5fd3" stroke-width="1.3"/>
<rect x="1387.1" y="52.1" width="3" height="9.7" fill="#2d5fd3"/>
<path d="M1411.4 52 v11.5 M1450.5 52 v11.5" stroke="#e0e0e0" stroke-width="1"/>
<rect x="1422.7" y="50.6" width="16.8" height="12.6" stroke="#555" stroke-width="1.3"/>
<rect x="1424.3" y="59.1" width="13.7" height="2.7" fill="#555"/>
<rect x="1459.6" y="50.6" width="16.8" height="12.6" stroke="#555" stroke-width="1.3"/>
<rect x="1472" y="52.1" width="3" height="9.7" fill="#555"/>
<!-- db strip icons -->
<ellipse cx="96.4" cy="100.6" rx="7.7" ry="2.6" stroke="#1f37c9" stroke-width="1.2"/>
<path d="M88.7 100.6 v11.2 a7.7 2.6 0 0 0 15.4 0 v-11.2 M88.7 106.2 a7.7 2.6 0 0 0 15.4 0" stroke="#1f37c9" stroke-width="1.2"/>
<ellipse cx="96.4" cy="188.8" rx="7.7" ry="2.6" stroke="#4caa42" stroke-width="1.2"/>
<path d="M88.7 188.8 v11.2 a7.7 2.6 0 0 0 15.4 0 v-11.2 M88.7 194.4 a7.7 2.6 0 0 0 15.4 0" stroke="#4caa42" stroke-width="1.2"/>
<!-- search magnifier -->
<circle cx="159.2" cy="121.9" r="4.6" stroke="#222" stroke-width="1.3"/>
<path d="M162.6 125.3 l3 3" stroke="#222" stroke-width="1.5"/>
<!-- sliders icon -->
<path d="M398 118.4 h15 M398 123 h15 M398 127.4 h15" stroke="#666" stroke-width="1.2"/>
<path d="M410.1 116.3 v4.2 M405.4 120.9 v4.2 M410.1 125.3 v4.2" stroke="#666" stroke-width="2"/>
<!-- chevrons -->
<path d="M140.3 144.3 l3.8 4 l3.8 -4 M140.3 164.3 l3.8 4 l3.8 -4" stroke="#777" stroke-width="1.3"/>
<!-- checkmarks -->
<path d="M441 96 l2.3 2.5 l4.2 -5.2 M441 126 l2.3 2.5 l4.2 -5.2" stroke="#fff" stroke-width="1.6"/>
<!-- select arrows -->
<path d="M560.3 94.5 l1.8 -2 l1.8 2 M560.3 96.3 l1.8 2 l1.8 -2 M676.3 94.5 l1.8 -2 l1.8 2 M676.3 96.3 l1.8 2 l1.8 -2" stroke="#333" stroke-width="1.1"/>
<path d="M560.3 124.5 l1.8 -2 l1.8 2 M560.3 126.3 l1.8 2 l1.8 -2 M676.3 124.5 l1.8 -2 l1.8 2 M676.3 126.3 l1.8 2 l1.8 -2" stroke="#333" stroke-width="1.1"/>
<!-- apply all chevron -->
<path d="M1464.5 153.5 l3.5 3.5 l3.5 -3.5" stroke="#333" stroke-width="1.2"/>
<path d="M1455.8 150 v10.5" stroke="#e0e0e0" stroke-width="1"/>
<!-- minus plus -->
<path d="M1441.3 96 h8 M1441.3 126 h8" stroke="#444" stroke-width="1.4"/>
<path d="M1467.8 96 h8 M1471.8 92 v8 M1467.8 126 h8 M1471.8 122 v8" stroke="#444" stroke-width="1.4"/>
<!-- bottom plus/chevron left -->
<path d="M152.3 954.6 h9.6 M157.4 950.2 v9" stroke="#333" stroke-width="1.3"/>
<path d="M170.4 948.5 v11.5" stroke="#e6e6e6" stroke-width="1"/>
<path d="M176.4 953.3 l4.4 4.4 l4.4 -4.4" stroke="#444" stroke-width="1.3"/>
<!-- row plus -->
<path d="M579 954.7 h9.5 M583.75 950 v9.5" stroke="#333" stroke-width="1.3"/>
<!-- nav -->
<path d="M1403 949 l-5.5 5.5 l5.5 5.5" stroke="#b5b5b5" stroke-width="1.2"/>
<path d="M1417.3 948 v13 M1450.3 948 v13" stroke="#e3e3e3" stroke-width="1"/>
<path d="M1464.5 949 l5.5 5.5 l-5.5 5.5" stroke="#333" stroke-width="1.3"/>
<path d="M447.91 152.89 L449.89 153.06 L449.89 155.54 L447.91 155.71 L447.41 156.91 L448.69 158.44 L446.94 160.19 L445.41 158.91 L444.21 159.41 L444.04 161.39 L441.56 161.39 L441.39 159.41 L440.19 158.91 L438.66 160.19 L436.91 158.44 L438.19 156.91 L437.69 155.71 L435.71 155.54 L435.71 153.06 L437.69 152.89 L438.19 151.69 L436.91 150.16 L438.66 148.41 L440.19 149.69 L441.39 149.19 L441.56 147.21 L444.04 147.21 L444.21 149.19 L445.41 149.69 L446.94 148.41 L448.69 150.16 L447.41 151.69Z" fill="#777"/><circle cx="442.8" cy="154.3" r="2.0" fill="#efefef"/><path d="M77.81 954.19 L79.79 954.36 L79.79 956.84 L77.81 957.01 L77.31 958.21 L78.59 959.74 L76.84 961.49 L75.31 960.21 L74.11 960.71 L73.94 962.69 L71.46 962.69 L71.29 960.71 L70.09 960.21 L68.56 961.49 L66.81 959.74 L68.09 958.21 L67.59 957.01 L65.61 956.84 L65.61 954.36 L67.59 954.19 L68.09 952.99 L66.81 951.46 L68.56 949.71 L70.09 950.99 L71.29 950.49 L71.46 948.51 L73.94 948.51 L74.11 950.49 L75.31 950.99 L76.84 949.71 L78.59 951.46 L77.31 952.99Z" fill="#777"/><circle cx="72.7" cy="955.6" r="2.0" fill="#fff"/><path d="M1439.01 952.99 L1440.99 953.16 L1440.99 955.64 L1439.01 955.81 L1438.51 957.01 L1439.79 958.54 L1438.04 960.29 L1436.51 959.01 L1435.31 959.51 L1435.14 961.49 L1432.66 961.49 L1432.49 959.51 L1431.29 959.01 L1429.76 960.29 L1428.01 958.54 L1429.29 957.01 L1428.79 955.81 L1426.81 955.64 L1426.81 953.16 L1428.79 952.99 L1429.29 951.79 L1428.01 950.26 L1429.76 948.51 L1431.29 949.79 L1432.49 949.29 L1432.66 947.31 L1435.14 947.31 L1435.31 949.29 L1436.51 949.79 L1438.04 948.51 L1439.79 950.26 L1438.51 951.79Z" fill="#222"/><circle cx="1433.9" cy="954.4" r="2.0" fill="#fff"/></svg>

<div class="a" style="left:880px;top:948.5px;font-size:13.1px;color:#8d8d8d">1-300 of 859 rows</div>
</div>

</body></html>
